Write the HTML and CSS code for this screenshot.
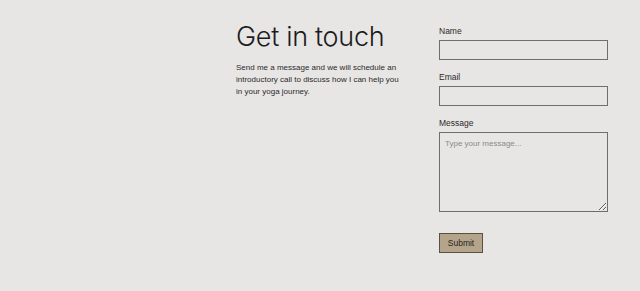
FILE: index.html
```html
<!DOCTYPE html>
<html lang="en">
<head>
    <meta charset="UTF-8">
    <meta name="viewport" content="width=device-width, initial-scale=1.0">
    <title>Get in touch</title>
    <link rel="stylesheet" href="styles.css">
</head>
<body>
    <!-- Contact Section -->
    <section class="contact">
        <div class="contact-intro">
            <h1>Get in touch</h1>
            <p>Send me a message and we will schedule an introductory call to discuss how I can help you in your yoga journey.</p>
        </div>
        <form class="contact-form" onsubmit="return false">
            <label for="name">Name</label>
            <input type="text" id="name">
            <label for="email">Email</label>
            <input type="email" id="email">
            <label for="message">Message</label>
            <textarea id="message" placeholder="Type your message..."></textarea>
            <button type="submit">Submit</button>
        </form>
    </section>
</body>
</html>
```

FILE: styles.css
```css
body {
    margin: 0;
    font-family: Inter, "Liberation Sans", sans-serif;
    background-color: #e8e5e5;
    color: #1c1c1c;
}
.contact {
    display: flex;
    justify-content: space-between;
    padding: 20px 32px 0 236px;
}
.contact-intro {
    width: 165px;
}
.contact-intro h1 {
    margin: 0;
    font-size: 27px;
    font-weight: 300;
    letter-spacing: -0.3px;
    line-height: 34px;
}
.contact-intro p {
    margin: 8px 0 0;
    font-family: "Liberation Sans", Arial, sans-serif;
    font-size: 8px;
    line-height: 12px;
    color: #2a2a2a;
}
.contact-form {
    display: flex;
    flex-direction: column;
    width: 169px;
    padding-top: 5px;
}
.contact-form label {
    font-family: "Liberation Sans", Arial, sans-serif;
    font-size: 8.5px;
    line-height: 12px;
    margin-bottom: 3px;
    color: #2a2a2a;
}
.contact-form input, .contact-form textarea {
    box-sizing: border-box;
    width: 100%;
    margin: 0 0 11px;
    border: 1px solid #6e6e6e;
    background: transparent;
    font-family: "Liberation Sans", Arial, sans-serif;
}
.contact-form input {
    height: 20px;
}
.contact-form textarea {
    height: 80px;
    padding: 6px 5px;
    font-size: 8px;
    margin-bottom: 21px;
    resize: vertical;
}
.contact-form textarea::placeholder {
    color: #8a8a8a;
}
.contact-form button {
    align-self: flex-start;
    width: 44px;
    height: 20px;
    padding: 0;
    background-color: #b5a48c;
    border: 1px solid #5a5040;
    font-family: "Liberation Sans", Arial, sans-serif;
    font-size: 8.5px;
    color: #2a2418;
}
```
